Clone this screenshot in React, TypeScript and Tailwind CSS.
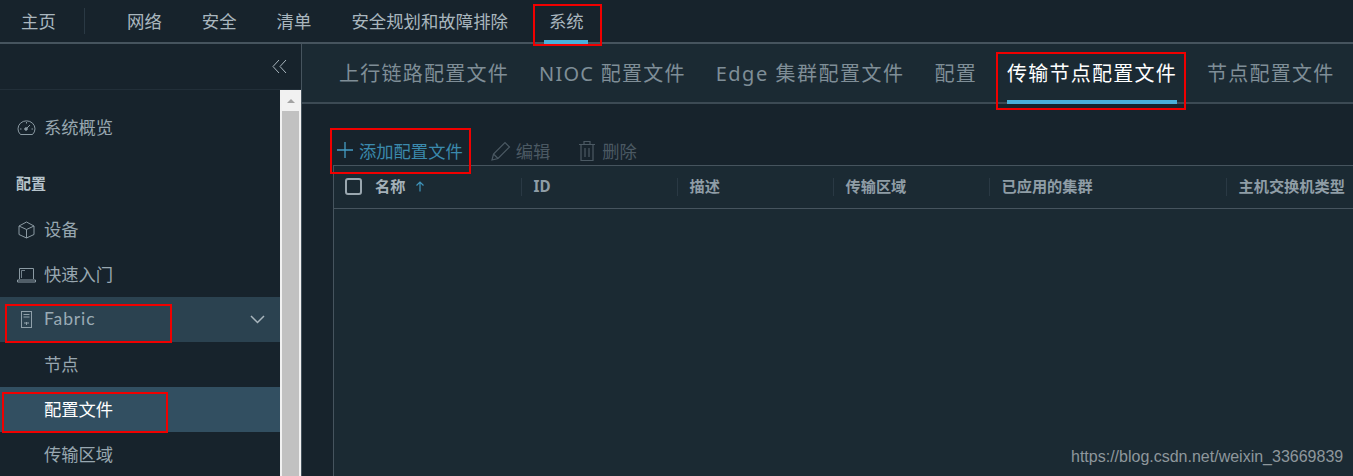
import React from 'react';

const FONT = "font-['Noto_Sans','Noto_Sans_CJK_SC',sans-serif]";

const navItems = ['网络', '安全', '清单', '安全规划和故障排除'];
const tabs = [
  { label: '上行链路配置文件', cls: '' },
  { label: 'NIOC 配置文件', cls: '' },
  { label: 'Edge 集群配置文件', cls: 'tracking-[1.5px]' },
  { label: '配置', cls: '' },
];
const columns = [
  { label: 'ID', width: 'w-[156px]' },
  { label: '描述', width: 'w-[156px]' },
  { label: '传输区域', width: 'w-[156px]' },
  { label: '已应用的集群', width: 'w-[237px]' },
  { label: '主机交换机类型', width: 'w-[127px]' },
];

function RedBox({ className }: { className: string }) {
  return <div className={`absolute border-2 border-[#f00000] pointer-events-none ${className}`} />;
}

function GaugeIcon() {
  return (
    <svg width="19" height="17" viewBox="0 0 19 17" fill="none" stroke="#8b9aa3" strokeWidth="1">
      <path d="M3.5 15.5 A8.5 8 0 1 1 15.5 15.5 Z" />
      <path d="M9.5 9.5 L13 6" />
      <circle cx="9" cy="10" r="1.3" fill="#8b9aa3" />
      <path d="M3 10h1.5M14.5 10H16M9.5 3v1.5" />
    </svg>
  );
}

function BoxIcon() {
  return (
    <svg width="17" height="18" viewBox="0 0 17 18" fill="none" stroke="#8b9aa3" strokeWidth="1">
      <path d="M8.5 1 L16 5 V13.5 L8.5 17 L1 13.5 V5 Z" />
      <path d="M1 5 L8.5 8.5 L16 5 M8.5 8.5 V17" />
    </svg>
  );
}

function LaptopIcon() {
  return (
    <svg width="19" height="16" viewBox="0 0 19 16" fill="none" stroke="#8b9aa3" strokeWidth="1">
      <path d="M2.5 12 V1.5 H16.5 V12" />
      <path d="M4.5 11 V3.5 H8" strokeWidth="0.8" />
      <path d="M0.5 13 H18.5 V15 H0.5 Z" />
    </svg>
  );
}

function ServerIcon() {
  return (
    <svg width="11" height="17" viewBox="0 0 11 17" fill="none" stroke="#8fa0aa" strokeWidth="1">
      <rect x="0.5" y="0.5" width="10" height="16" />
      <path d="M2.5 3.5h6M2.5 6h6" />
      <path d="M3 12h5M5.5 11v3" />
    </svg>
  );
}

function SideRow({ icon, label, className }: { icon?: React.ReactNode; label: string; className?: string }) {
  return (
    <div className={`flex items-center h-[45px] ${className ?? ''}`}>
      <div className="w-[44px] flex justify-center pl-[8px] shrink-0">{icon}</div>
      <span className="text-[17.3px]">{label}</span>
    </div>
  );
}

export default function App() {
  return (
    <div className={`relative w-[1353px] h-[476px] overflow-hidden bg-[#1b2a33] text-[#a9b6be] ${FONT}`}>
      {/* top nav */}
      <header className="flex items-center h-[44px] bg-[#17232c] border-b-2 border-[#46545e]">
        <div className="w-[85px] pl-[21px] text-[17.4px] border-r border-[#2a3944] h-[26px] flex items-center pt-[1px]">主页</div>
        <nav className="flex items-center gap-[40px] pl-[42px] text-[17.4px] h-full">
          {navItems.map((item) => (
            <span key={item} className="pt-[1px]">{item}</span>
          ))}
          <span className="relative h-full flex items-center pt-[1px] ml-[1px]">
            系统
            <span className="absolute -left-[5px] -right-[4px] -bottom-[2px] h-[4px] bg-[#49afd9]" />
          </span>
        </nav>
      </header>

      <div className="flex h-[432px]">
        {/* left sidebar */}
        <aside className="w-[301px] shrink-0 bg-[#17232c] flex flex-col">
          <div className="h-[46px] shrink-0 border-b border-[#222f39] flex items-center justify-end pr-[14px]">
            <svg width="15" height="15" viewBox="0 0 15 15" fill="none" stroke="#a9b6be" strokeWidth="1">
              <path d="M7 1 L1 7.5 L7 14 M14 1 L8 7.5 L14 14" />
            </svg>
          </div>
          <div className="flex flex-1 min-h-0">
            <div className="w-[280px] shrink-0 text-[#98a7b0]">
              <SideRow icon={<GaugeIcon />} label="系统概览" className="mt-[15px]" />
              <div className="h-[25px] mt-[20px] pl-[16px] text-[15px] font-bold text-[#b6c3cb] flex items-center pt-[2px]">配置</div>
              <SideRow icon={<BoxIcon />} label="设备" className="mt-[12px]" />
              <SideRow icon={<LaptopIcon />} label="快速入门" />
              <div className="flex items-center justify-between h-[45px] bg-[#2b4250] pr-[15px]">
                <div className="flex items-center">
                  <div className="w-[44px] flex justify-center pl-[8px]">
                    <ServerIcon />
                  </div>
                  <span className="text-[17.5px] tracking-[0.9px] pb-[1px] font-['Lato','Noto_Sans_CJK_SC',sans-serif] text-[#9aabb5]">Fabric</span>
                </div>
                <svg width="15" height="9" viewBox="0 0 15 9" fill="none" stroke="#a9b6be" strokeWidth="1.5">
                  <path d="M1 1 L7.5 7.5 L14 1" />
                </svg>
              </div>
              <SideRow label="节点" />
              <SideRow label="配置文件" className="bg-[#324f61] text-white" />
              <SideRow label="传输区域" />
            </div>
            {/* scrollbar */}
            <div className="w-[21px] shrink-0 bg-[#f1f1f1] flex flex-col items-center">
              <div className="h-[21px] flex items-center justify-center shrink-0">
                <div className="w-0 h-0 border-l-[4px] border-r-[4px] border-b-[4px] border-l-transparent border-r-transparent border-b-[#a3a3a3]" />
              </div>
              <div className="w-[17px] flex-1 bg-[#c1c1c1]" />
            </div>
          </div>
        </aside>

        {/* main panel */}
        <main className="flex-1 min-w-0 border-l border-[#46545e]">
          <div className="flex items-end gap-[30px] h-[60px] pl-[37px] bg-[#1b2a33] border-b-2 border-[#3c4a54] text-[#7f8e97] text-[20px] tracking-[1.25px] whitespace-nowrap">
            {tabs.map((tab) => (
              <span key={tab.label} className={`h-[60px] flex items-center pt-[3px] whitespace-pre ${tab.cls}`}>
                {tab.label}
              </span>
            ))}
            <span className="relative h-[60px] flex items-center pt-[3px] text-white">
              传输节点配置文件
              <span className="absolute left-0 right-0 -bottom-[2px] h-[4px] bg-[#49afd9]" />
            </span>
            <span className="h-[60px] flex items-center pt-[3px]">节点配置文件</span>
          </div>

          <div className="h-[61px] bg-[#17232c] flex items-end pl-[34px] text-[16px]">
            <div className="flex items-center gap-[5px] text-[#3b8aad]">
              <svg className="mb-[5px]" width="18" height="18" viewBox="0 0 18 18" stroke="#449cc3" strokeWidth="1.3">
                <path d="M9 1v16M1 9h16" />
              </svg>
              <span className="text-[17.3px] leading-[26px]">添加配置文件</span>
            </div>
            <div className="flex items-center gap-[4px] ml-[27px] text-[#4b5963]">
              <svg className="mb-[3px]" width="22" height="22" viewBox="0 0 22 22" fill="none" stroke="#4b5963" strokeWidth="1.2">
                <path d="M2 20 L3.5 14 L15 2.5 L19.5 7 L8 18.5 Z M3.5 14 L8 18.5" />
              </svg>
              <span className="text-[17.3px] leading-[26px]">编辑</span>
            </div>
            <div className="flex items-center gap-[6px] ml-[28px] text-[#4b5963]">
              <svg className="mb-[3px]" width="18" height="22" viewBox="0 0 18 22" fill="none" stroke="#4b5963" strokeWidth="1.2">
                <path d="M1 4.5h16M6 4.5V1.5h6v3M3 4.5V20.5h12V4.5M7 8v9M11 8v9" />
              </svg>
              <span className="text-[17.3px] leading-[26px]">删除</span>
            </div>
          </div>

          {/* table */}
          <div className="h-[311px] bg-[#17232c] pl-[31px]">
            <div className="h-full bg-[#1b2a33] border-l border-t border-[#46545e]">
              <div className="flex items-center h-[43px] border-b border-[#46545e] text-[15.2px] font-bold text-[#8f9da6]">
                <div className="w-[187px] flex items-center shrink-0 pb-[1px]">
                  <div className="w-[17px] h-[17px] ml-[11px] rounded-[3px] border-2 border-[#9aa7af]" />
                  <span className="ml-[13px] text-[#a4b1b9]">名称</span>
                  <svg className="ml-[10px]" width="10" height="11" viewBox="0 0 10 11" fill="none" stroke="#3f94bb" strokeWidth="1.2">
                    <path d="M5 10.5V1M1.5 4.5 L5 1 L8.5 4.5" />
                  </svg>
                </div>
                {columns.map((col) => (
                  <div key={col.label} className={`${col.width} shrink-0 flex items-center h-[18px] pl-[11.5px] pb-[1px] border-l border-[#2a3944] whitespace-nowrap`}>
                    {col.label}
                  </div>
                ))}
              </div>
            </div>
          </div>
        </main>
      </div>

      {/* CSDN watermark */}
      <span className="absolute left-[1071px] top-[447px] text-[16px] leading-5 font-['Liberation_Sans',sans-serif] text-[#8e979c] whitespace-nowrap">
        https://blog.csdn.net/weixin_33669839
      </span>

      {/* red annotation boxes */}
      <RedBox className="left-[533px] top-[4px] w-[69px] h-[42px]" />
      <RedBox className="left-[996px] top-[52px] w-[190px] h-[58px]" />
      <RedBox className="left-[330px] top-[128px] w-[141px] h-[46px]" />
      <RedBox className="left-[5px] top-[304px] w-[167px] h-[39px]" />
      <RedBox className="left-[2px] top-[392px] w-[166px] h-[41px]" />
    </div>
  );
}
